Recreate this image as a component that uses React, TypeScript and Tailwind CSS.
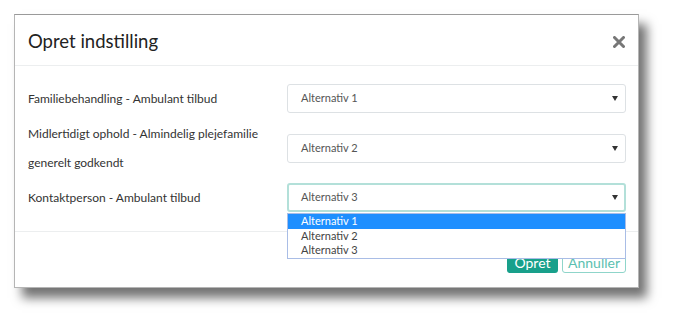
import { useState } from 'react';

const rows = [
  { label: ['Familiebehandling - Ambulant tilbud'], value: 'Alternativ 1' },
  { label: ['Midlertidigt ophold - Almindelig plejefamilie', 'generelt godkendt'], value: 'Alternativ 2' },
  { label: ['Kontaktperson - Ambulant tilbud'], value: 'Alternativ 3', open: true },
];

const options = ['Alternativ 1', 'Alternativ 2', 'Alternativ 3'];

function Arrow() {
  return (
    <svg width="6" height="5" viewBox="0 0 6 5" className="shrink-0">
      <path d="M0 0h6L3 5z" fill="#333" />
    </svg>
  );
}

export default function App() {
  const [hover] = useState(0);

  return (
    <div className="w-[675px] h-[323px] bg-white pt-[14px] pl-[14px] font-['Lato',sans-serif]">
      <div className="relative w-[625px] h-[274px] bg-white border border-[#b5b5b5] border-t-[#9a9a9a] shadow-[8px_10px_10px_rgba(0,0,0,0.55)] flex flex-col">
        {/* header */}
        <div className="h-[51px] shrink-0 border-b border-[#eceeef] flex items-center justify-between pl-[13px] pr-[12px] pt-[3px]">
          <h2 className="text-[18.5px] text-[#222] leading-none">Opret indstilling</h2>
          <svg width="12" height="12" viewBox="0 0 12 12" className="mr-[1px]">
            <path d="M1.5 1.5l9 9M10.5 1.5l-9 9" stroke="#777" strokeWidth="3" strokeLinecap="round" />
          </svg>
        </div>

        {/* body */}
        <div className="h-[165px] shrink-0 pt-[18px] pl-[13px] pr-[12px] flex flex-col gap-[6px]">
          {rows.map((r) => (
            <div key={r.value} className="flex items-center">
              <div className="w-[259px] shrink-0 text-[12px] leading-[29px] text-[#333]">
                {r.label.map((l) => (
                  <div key={l}>{l}</div>
                ))}
              </div>
              <div className="relative flex-1">
                <div
                  className={
                    r.open
                      ? 'h-[29px] rounded-[3px] border-2 border-[#b3e0d9] flex items-center justify-between pl-[12px] pr-[6px] text-[11px] text-[#555]'
                      : 'h-[29px] rounded-[3px] border border-[#dde1e4] flex items-center justify-between pl-[13px] pr-[7px] text-[11px] text-[#555]'
                  }
                >
                  <span>{r.value}</span>
                  <Arrow />
                </div>
                {r.open && (
                  <div className="absolute left-0 right-0 top-[30px] z-10 bg-white border border-[#a9bde6] text-[11px] leading-[14.5px]">
                    {options.map((o, i) => (
                      <div
                        key={o}
                        className={
                          i === hover
                            ? 'pl-[13px] bg-[#1e8fff] text-white'
                            : 'pl-[13px] text-[#444]'
                        }
                      >
                        {o}
                      </div>
                    ))}
                  </div>
                )}
              </div>
            </div>
          ))}
        </div>

        {/* footer */}
        <div className="flex-1 border-t border-[#eceeef] flex justify-end items-start gap-[4px] pt-[20px] pr-[12px]">
          <button className="h-[21px] w-[51px] rounded-[3px] bg-[#18a08b] text-white text-[14px] leading-none">
            Opret
          </button>
          <button className="h-[21px] w-[64px] rounded-[3px] border border-[#8fd5ca] text-[#5cbfb0] text-[14px] leading-none">
            Annuller
          </button>
        </div>
      </div>
    </div>
  );
}
